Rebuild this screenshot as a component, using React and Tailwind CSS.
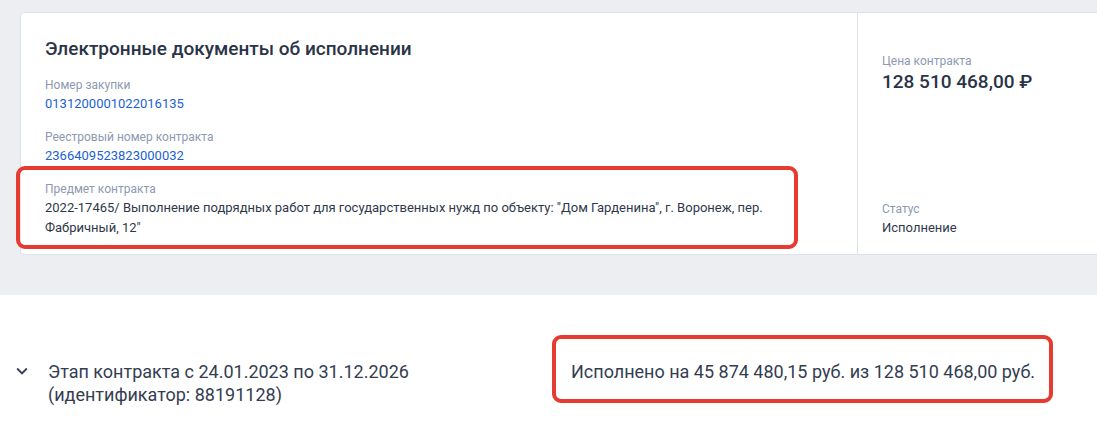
const fields = [
  { label: 'Номер закупки', value: '0131200001022016135', link: true },
  { label: 'Реестровый номер контракта', value: '2366409523823000032', link: true },
];

function Field({ label, value, link, children }) {
  return (
    <div className="relative">
      <p className="text-[12px] leading-[17px] text-[#8e99b0]">{label}</p>
      <p className={`text-[13px] leading-5 ${link ? 'text-[#1d5fd6]' : 'text-[#2f384b]'}`}>{value}</p>
      {children}
    </div>
  );
}

export default function App() {
  return (
    <main className="min-h-[424px] overflow-hidden bg-white font-['Roboto',sans-serif]">
      <section className="bg-[#eceef1] pb-10 pl-5 pt-3">
        <div className="flex w-[1100px] rounded-sm border border-[#dde3ec] bg-white">
          <div className="flex w-[837px] flex-col gap-[15px] border-r border-[#dde3ec] px-6 pb-4 pt-6">
            <h1 className="mb-px text-[19px] font-medium leading-6 text-[#2b3447]">Электронные документы об исполнении</h1>
            {fields.map((f) => (
              <Field key={f.label} {...f} />
            ))}
            <Field
              label="Предмет контракта"
              value={'2022-17465/ Выполнение подрядных работ для государственных нужд по объекту: "Дом Гарденина", г. Воронеж, пер. Фабричный, 12"'}
            >
              <div className="absolute -left-[29px] -top-[15px] -bottom-[11px] right-[35px] rounded-[9px] border-4 border-[#e53b30]" />
            </Field>
          </div>
          <div className="flex flex-1 flex-col justify-between px-6 pb-4 pt-10">
            <div>
              <p className="text-[12px] leading-[17px] text-[#8e99b0]">Цена контракта</p>
              <p className="text-[19px] font-medium leading-6 text-[#2b3447]">128 510 468,00 ₽</p>
            </div>
            <div>
              <p className="text-[12px] leading-[17px] text-[#8e99b0]">Статус</p>
              <p className="text-[13px] leading-5 text-[#2f384b]">Исполнение</p>
            </div>
          </div>
        </div>
      </section>

      <section className="flex items-start pl-[11px] pt-[65px]">
        <svg viewBox="0 0 24 24" className="h-[22px] w-[22px] fill-[#3a4356]">
          <path d="M16.59 8.59L12 13.17 7.41 8.59 6 10l6 6 6-6z" />
        </svg>
        <p className="ml-[15px] w-[430px] text-[18px] leading-[23px] text-[#343d51]">
          Этап контракта с 24.01.2023 по 31.12.2026 (идентификатор: 88191128)
        </p>
        <div className="relative ml-[93px]">
          <p className="text-[18px] leading-6 text-[#343d51]">Исполнено на 45 874 480,15 руб. из 128 510 468,00 руб.</p>
          <div className="absolute -bottom-[19px] -left-[19px] -right-[18px] -top-[25px] rounded-[9px] border-4 border-[#e53b30]" />
        </div>
      </section>
    </main>
  );
}
